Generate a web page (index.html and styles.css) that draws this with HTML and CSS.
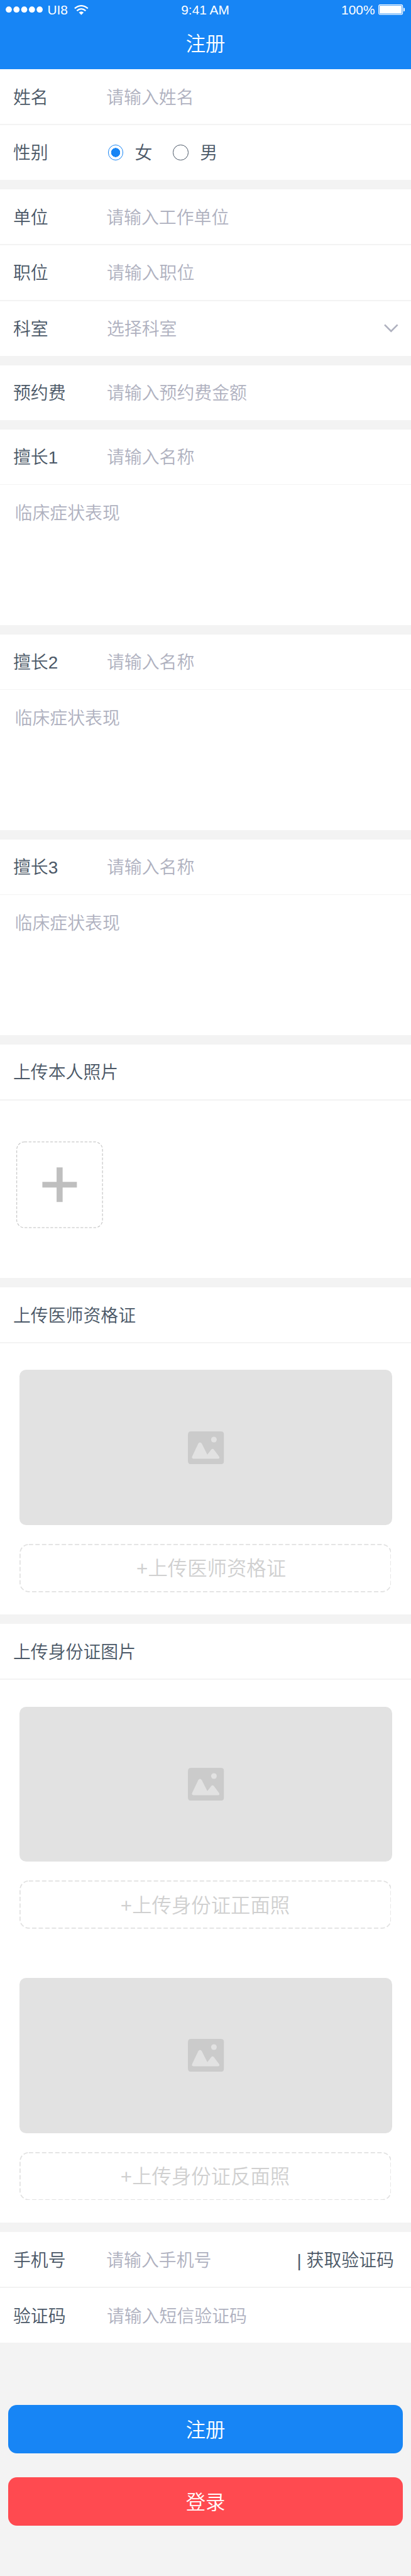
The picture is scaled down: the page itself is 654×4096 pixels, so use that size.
FILE: index.html
```html
<!DOCTYPE html>
<html lang="zh-CN">
<head>
<meta charset="utf-8">
<title>注册</title>
<link rel="stylesheet" href="styles.css">
</head>
<body>
<svg class="defs" aria-hidden="true">
  <symbol id="picture" viewBox="0 0 66 60">
    <path fill="#cbcbcb" d="M6 0H60Q66 0 66 6V54Q66 60 60 60H6Q0 60 0 54V6Q0 0 6 0Z"/>
    <circle cx="47.5" cy="15" r="5.2" fill="#e2e2e2"/>
    <path fill="#e2e2e2" d="M7.7 46 19 22Q22 18 25.200 22L35.500 42.500 42.500 33.200Q45 30.500 47.500 33.200L57 46Q58.500 49.500 55.500 50H10Q6.500 49.500 7.700 46Z"/>
  </symbol>
</svg>
<div class="page">
  <header class="header">
    <div class="status">
      <div class="carrier">
        <svg class="signal" viewBox="0 0 68 12"><g fill="#fff"><circle cx="5.700" cy="6" r="5.600"/><circle cx="19.800" cy="6" r="5.600"/><circle cx="33.900" cy="6" r="5.600"/><circle cx="48" cy="6" r="5.600"/><circle cx="62.100" cy="6" r="5.600"/></g></svg>
        <span>UI8</span>
        <svg class="wifi" viewBox="0 0 26 18"><g fill="none" stroke="#fff" stroke-width="2.600"><path d="M1 6.200Q13-3.600 25 6.200"/><path d="M5 10.500Q13 3.700 21 10.500"/></g><path fill="#fff" d="M8.600 13.600Q13 9.800 17.400 13.600L13 18Z"/></svg>
      </div>
      <span class="time">9:41 AM</span>
      <div class="power">
        <span>100%</span>
        <svg class="battery" viewBox="0 0 49 20"><rect x=".7" y=".7" width="43.600" height="17.600" rx="2.500" fill="none" stroke="#fff" stroke-width="1.300"/><rect x="2.300" y="2.300" width="40.400" height="14.400" rx="1" fill="#fff"/><path fill="#fff" d="M46 6Q49 7 49 9.500T46 13Z"/></svg>
      </div>
    </div>
    <h1 class="title">注册</h1>
  </header>

  <section class="group">
    <div class="row"><span class="label">姓名</span><span class="hint first">请输入姓名</span></div>
    <div class="row gender">
      <span class="label">性别</span>
      <div class="radios">
        <span class="radio on"></span><span class="choice">女</span>
        <span class="radio"></span><span class="choice">男</span>
      </div>
    </div>
  </section>

  <section class="group">
    <div class="row"><span class="label">单位</span><span class="hint first">请输入工作单位</span></div>
    <div class="row"><span class="label">职位</span><span class="hint">请输入职位</span></div>
    <div class="row">
      <span class="label">科室</span><span class="hint">选择科室</span>
      <svg class="chevron" viewBox="0 0 26 16"><path d="M1.200 1.500 13 13.500 24.800 1.500" fill="none" stroke="#afb1bf" stroke-width="3"/></svg>
    </div>
  </section>

  <section class="group">
    <div class="row"><span class="label">预约费</span><span class="hint">请输入预约费金额</span></div>
  </section>

  <section class="group">
    <div class="row"><span class="label">擅长1</span><span class="hint">请输入名称</span></div>
    <div class="notes">临床症状表现</div>
  </section>
  <section class="group">
    <div class="row"><span class="label">擅长2</span><span class="hint">请输入名称</span></div>
    <div class="notes">临床症状表现</div>
  </section>
  <section class="group">
    <div class="row"><span class="label">擅长3</span><span class="hint">请输入名称</span></div>
    <div class="notes">临床症状表现</div>
  </section>

  <section class="group">
    <div class="row"><span class="label">上传本人照片</span></div>
    <div class="photo">
      <svg class="add" viewBox="0 0 158 158"><rect x=".75" y=".75" width="156.500" height="156.500" rx="14" fill="none" stroke="#bfbfbf" stroke-width="1.200" stroke-dasharray="5 2.850"/><path fill="#bfbfbf" d="M73.500 47.200H84.500V73.800H110.500V84H84.500V110.500H73.500V84H47.500V73.800H73.500Z"/></svg>
    </div>
  </section>

  <section class="group">
    <div class="row"><span class="label">上传医师资格证</span></div>
    <div class="uploads">
      <div class="upload">
        <div class="preview"><svg class="picture"><use href="#picture"/></svg></div>
        <div class="pick shifted"><svg class="outline"><rect class="dash"/></svg><span>+上传医师资格证</span></div>
      </div>
    </div>
  </section>

  <section class="group">
    <div class="row"><span class="label">上传身份证图片</span></div>
    <div class="uploads">
      <div class="upload">
        <div class="preview"><svg class="picture"><use href="#picture"/></svg></div>
        <div class="pick"><svg class="outline"><rect class="dash"/></svg><span>+上传身份证正面照</span></div>
      </div>
      <div class="upload">
        <div class="preview"><svg class="picture"><use href="#picture"/></svg></div>
        <div class="pick"><svg class="outline"><rect class="dash"/></svg><span>+上传身份证反面照</span></div>
      </div>
    </div>
  </section>

  <section class="group">
    <div class="row"><span class="label">手机号</span><span class="hint first">请输入手机号</span><span class="code"><span>|</span><span>获取验证码</span></span></div>
    <div class="row"><span class="label">验证码</span><span class="hint">请输入短信验证码</span></div>
  </section>

  <div class="actions">
    <div class="button register">注册</div>
    <div class="button login">登录</div>
  </div>
</div>
</body>
</html>
```
FILE: styles.css
```css
/* 1rem = 100 design pixels */
html { font-size: 87.186px; }
* { box-sizing: border-box; }
body {
  margin: 0;
  background: #f3f3f3;
  color: #4a5766;
  font-family: "Liberation Sans", "Noto Sans CJK SC", sans-serif;
  font-weight: 350;
}
svg { display: block; flex: none; }
.defs { position: absolute; width: 0; height: 0; }
.page {
  display: flex;
  flex-direction: column;
  gap: .17rem;
  height: 46.98rem;
  overflow: hidden;
  font-size: .32rem;
  line-height: .48rem;
  white-space: nowrap;
}

.header { height: 1.26rem; margin-bottom: -.17rem; background: #1785f5; color: #fff; }
.status {
  display: grid;
  grid-template-columns: 1fr auto 1fr;
  align-items: center;
  height: .36rem;
  padding: 0 .11rem 0 .1rem;
  font-size: .24rem;
  line-height: .36rem;
}
.carrier, .power { display: flex; align-items: center; }
.carrier { gap: .085rem; }
.power { justify-content: flex-end; gap: .06rem; }
.signal { width: .68rem; height: .12rem; }
.wifi { width: .26rem; height: .18rem; margin-left: .03rem; }
.battery { width: .49rem; height: .2rem; }
.title {
  margin: .18rem 0 0;
  font-size: .36rem;
  font-weight: 350;
  line-height: .54rem;
  text-align: center;
}

.group { display: flex; flex-direction: column; gap: .02rem; }
.row { display: flex; align-items: center; height: 1rem; padding-left: .24rem; background: #fff; }
.label, .hint, .choice, .code { padding-top: .05rem; }
.gender .label, .gender .choice { padding-top: .03rem; }
.label { min-width: 1.71rem; }
.hint { color: #afb1bf; }
.hint.first { margin-left: -.01rem; }
.chevron { width: .26rem; height: .16rem; margin: 0 .23rem 0 auto; }
.radios { display: flex; align-items: center; margin-left: .02rem; }
.radio { width: .28rem; height: .28rem; border: 1px solid #4a5766; border-radius: 50%; }
.radio.on { border-color: #1785f5; background: radial-gradient(circle, #1785f5 0 .08rem, #fff .085rem); }
.choice { width: .7rem; padding-left: .21rem; }
.choice + .radio { margin-left: .21rem; }
.code { display: flex; gap: .09rem; margin: 0 .31rem 0 auto; }

.notes { height: 2.55rem; padding: .285rem .27rem; background: #fff; color: #afb1bf; }
.photo { height: 3.24rem; padding: .75rem .3rem; background: #fff; }
.add { width: 1.58rem; height: 1.58rem; }

.uploads {
  display: flex;
  flex-direction: column;
  gap: .9rem;
  padding: .49rem .34rem .41rem .35rem;
  background: #fff;
}
.upload { display: flex; flex-direction: column; gap: .34rem; }
.preview {
  display: flex;
  align-items: center;
  justify-content: center;
  height: 2.83rem;
  margin-left: .01rem;
  border-radius: .12rem;
  background: #e2e2e2;
}
.picture { width: .66rem; height: .6rem; }
.pick {
  display: grid;
  place-items: center;
  width: 6.79rem;
  height: .88rem;
  color: #d0d0d0;
  font-size: .36rem;
}
.pick > * { grid-area: 1 / 1; }
.pick span { padding-top: .05rem; }
.outline { width: 6.79rem; height: .88rem; }
.dash {
  x: .01rem;
  y: .01rem;
  width: 6.77rem;
  height: .86rem;
  rx: .16rem;
  fill: none;
  stroke: #e1e1e1;
  stroke-width: .02rem;
  stroke-dasharray: .08rem .04rem;
}
.shifted span { margin-left: .22rem; }

.actions { display: flex; flex-direction: column; gap: .44rem; padding: .97rem .15rem 0; }
.button {
  height: .88rem;
  padding-top: .025rem;
  border-radius: .16rem;
  color: #fff;
  font-size: .36rem;
  line-height: .88rem;
  text-align: center;
}
.register { background: #1785f5; }
.login { background: #ff4a50; }
```
